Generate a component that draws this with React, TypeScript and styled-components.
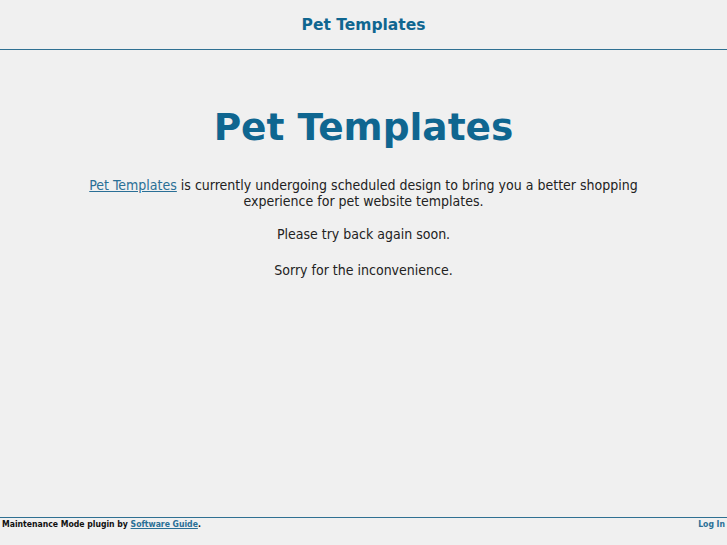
import React from 'react';
import styled, { createGlobalStyle } from 'styled-components';

const GlobalStyle = createGlobalStyle`
  html, body {
    margin: 0;
    padding: 0;
    background: #f0f0f0;
    font-family: "DejaVu Sans", Verdana, sans-serif;
  }
`;

const Page = styled.div`
  display: flex;
  flex-direction: column;
  min-height: 100vh;
`;

const Header = styled.header`
  height: 49px;
  display: flex;
  align-items: center;
  justify-content: center;
  border-bottom: 1px solid #2f7092;
`;

const HeaderTitle = styled.div`
  font-size: 15.5px;
  font-weight: bold;
  color: #0f6690;
`;

const Main = styled.main`
  flex: 1;
  display: flex;
  flex-direction: column;
  align-items: center;
  text-align: center;
  padding-top: 53px;
`;

const Title = styled.h1`
  margin: 0;
  font-size: 37.5px;
  line-height: 48px;
  font-weight: bold;
  color: #0f6690;
`;

const Text = styled.p<{ $top: number }>`
  margin: ${(p) => p.$top}px 0 0;
  max-width: 560px;
  font-family: "DejaVu Sans Condensed", "DejaVu Sans", sans-serif;
  font-size: 14px;
  line-height: 16px;
  color: #222;
`;

const Link = styled.a`
  color: #2a6f96;
  text-decoration: underline;
`;

const Footer = styled.footer`
  display: flex;
  justify-content: space-between;
  border-top: 1px solid #2f7092;
  padding: 1px 2px 0;
  height: 26px;
  font-family: "DejaVu Sans Condensed", "DejaVu Sans", sans-serif;
  font-size: 8.6px;
  line-height: 11px;
  font-weight: bold;
  color: #111;
`;

const FooterText = styled.span``;

const FooterLink = styled.a<{ $plain?: boolean }>`
  color: #2a6f96;
  text-decoration: ${(p) => (p.$plain ? 'none' : 'underline')};
`;

export default function App() {
  return (
    <Page>
      <GlobalStyle />
      <Header>
        <HeaderTitle>Pet Templates</HeaderTitle>
      </Header>
      <Main>
        <Title>Pet Templates</Title>
        <Text $top={26}>
          <Link href="#">Pet Templates</Link> is currently undergoing scheduled design to bring you a better shopping
          experience for pet website templates.
        </Text>
        <Text $top={17}>Please try back again soon.</Text>
        <Text $top={20}>Sorry for the inconvenience.</Text>
      </Main>
      <Footer>
        <FooterText>
          Maintenance Mode plugin by <FooterLink href="#">Software Guide</FooterLink>.
        </FooterText>
        <FooterLink href="#" $plain>Log In</FooterLink>
      </Footer>
    </Page>
  );
}
